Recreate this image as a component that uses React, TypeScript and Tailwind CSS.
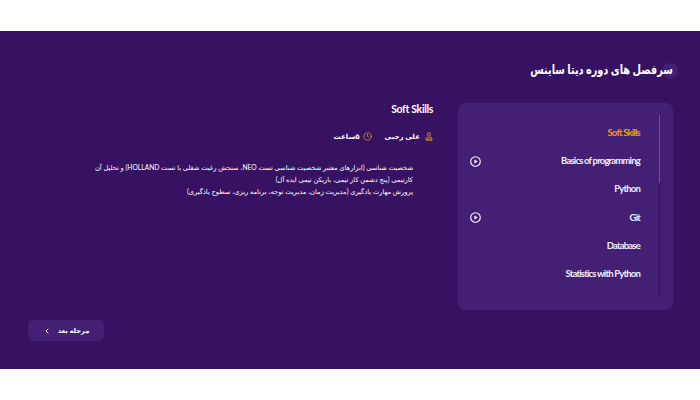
import { Clock, ChevronLeft } from "lucide-react";

const lessons = [
  { title: "Soft Skills", active: true },
  { title: "Basics of programming", play: true },
  { title: "Python" },
  { title: "Git", play: true },
  { title: "Database" },
  { title: "Statistics with Python" },
];

function PlayIcon() {
  return (
    <svg width="11" height="11" viewBox="0 0 12 12" fill="none" className="text-white">
      <circle cx="6" cy="6" r="5.2" stroke="currentColor" strokeWidth="1.2" />
      <path d="M4.8 3.7v4.6L8.4 6z" fill="currentColor" />
    </svg>
  );
}

function TeacherIcon() {
  return (
    <svg width="8" height="9" viewBox="0 0 8 9" fill="none" className="text-[#c98a1e]">
      <circle cx="4" cy="2.4" r="1.6" stroke="currentColor" strokeWidth="1" />
      <path d="M2.8 4.6 L1 6.4 V8.2 H7 V6.4 L5.2 4.6" stroke="currentColor" fill="currentColor" fillOpacity="0.5" strokeWidth="1" />
    </svg>
  );
}

export default function App() {
  return (
    <div className="flex h-[400px] w-[700px] flex-col bg-white font-['Lato','DejaVu_Sans',sans-serif] text-white">
      <div className="mt-[31px] flex h-[338px] flex-col bg-[#371162] pl-[28px] pr-[27px]" dir="rtl">
        <div className="mt-[30px] flex h-[18px] items-center">
          <h1 className="relative text-[12.5px] leading-none font-bold">
            <span className="absolute -top-[1px] -right-[5px] size-[16px] rounded-full bg-[#432073]" />
            <span className="relative block origin-right scale-x-[0.78] whitespace-nowrap">
              سرفصل های دوره دیتا ساینس
            </span>
          </h1>
        </div>

        <div className="mt-[24px] flex h-[207px]">
          <aside className="relative h-full w-[215px] shrink-0 rounded-[7px] bg-[#432073]">
            <div className="flex flex-col pt-[16px] pr-[33px] pl-[12px]">
              {lessons.map((l) => (
                <div key={l.title} className="flex h-[28.2px] items-center justify-between">
                  <span
                    dir="ltr"
                    className={`text-[9.5px] font-bold tracking-[-0.8px] ${l.active ? "text-[#f39c12]" : "text-[#f3ecfb]"}`}
                  >
                    {l.title}
                  </span>
                  {l.play && <PlayIcon />}
                </div>
              ))}
            </div>
            <div className="absolute top-[12px] right-[13px] h-[183px] w-[1px] bg-[#371162]">
              <div className="h-[68px] w-[1.5px] bg-[#6d5396]" />
            </div>
          </aside>

          <section className="mr-[25px] flex-1">
            <h2 dir="ltr" className="text-right text-[10.5px] leading-[12px] font-bold tracking-[-0.35px]">
              Soft Skills
            </h2>
            <div className="mt-[15px] flex h-[12px] items-center text-[7px] font-bold">
              <TeacherIcon />
              <span className="mr-[5px] whitespace-nowrap">علی رجبی</span>
              <Clock size={9} className="mr-[13px] text-[#d9961a]" />
              <span className="mr-[3px] whitespace-nowrap">۵ساعت</span>
            </div>
            <div className="mt-[19px] mr-[20px] w-[330px] text-[6.7px] leading-[12px] text-white">
              <p>
                شخصیت شناسی (ابزارهای معتبر شخصیت شناسی تست NEO، سنجش رغبت شغلی با تست HOLLAND) و تحلیل آن کارتیمی (پنج دشمن کار تیمی، بازیکن تیمی ایده آل)
              </p>
              <p>پرورش مهارت یادگیری (مدیریت زمان، مدیریت توجه، برنامه ریزی، سطوح یادگیری)</p>
            </div>
          </section>
        </div>

        <div className="mt-[10px] flex justify-end">
          <button className="flex h-[21px] w-[76px] items-center justify-center gap-[7px] rounded-[5px] bg-[#432073] text-[6.7px] font-bold">
            <span>مرحله بعد</span>
            <ChevronLeft size={8} strokeWidth={3} />
          </button>
        </div>
      </div>
    </div>
  );
}
